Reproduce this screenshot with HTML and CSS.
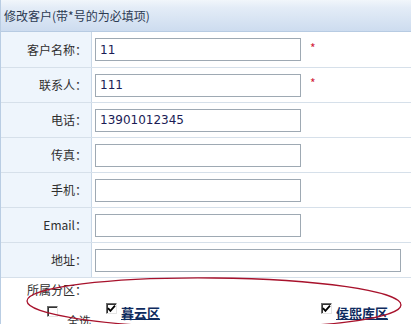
FILE: index.html
```html
<!DOCTYPE html>
<html lang="zh-CN">
<head>
    <meta charset="UTF-8">
    <title>修改客户</title>
    <link rel="stylesheet" href="styles.css">
</head>
<body>
    <div class="panel">
        <div class="panel-title">修改客户(带*号的为必填项)</div>

        <table class="form">
            <tr>
                <th>客户名称：</th>
                <td><input type="text" class="field" value="11"><span class="req">*</span></td>
            </tr>
            <tr>
                <th>联系人：</th>
                <td><input type="text" class="field" value="111"><span class="req">*</span></td>
            </tr>
            <tr>
                <th>电话：</th>
                <td><input type="text" class="field" value="13901012345"></td>
            </tr>
            <tr>
                <th>传真：</th>
                <td><input type="text" class="field"></td>
            </tr>
            <tr>
                <th>手机：</th>
                <td><input type="text" class="field"></td>
            </tr>
            <tr>
                <th>Email：</th>
                <td><input type="text" class="field"></td>
            </tr>
            <tr>
                <th>地址：</th>
                <td><input type="text" class="field wide"></td>
            </tr>
        </table>

        <div class="areas">
            <div class="areas-label">所属分区：</div>
            <div class="area-list">
                <label class="area-item all">
                    <span class="box"></span>
                    <span class="all-text">全选</span>
                </label>
                <label class="area-item">
                    <span class="box checked">
                        <svg width="9" height="9" viewBox="0 0 9 9"><path d="M1 4.2 L3.4 6.8 L8 1.6" fill="none" stroke="#000" stroke-width="1.8"/></svg>
                    </span>
                    <span class="area-name">暮云区</span>
                </label>
                <label class="area-item far">
                    <span class="box checked">
                        <svg width="9" height="9" viewBox="0 0 9 9"><path d="M1 4.2 L3.4 6.8 L8 1.6" fill="none" stroke="#000" stroke-width="1.8"/></svg>
                    </span>
                    <span class="area-name">侯熙库区</span>
                </label>
            </div>
        </div>

        <!-- hand drawn annotation over the area picker -->
        <svg class="mark" width="411" height="324" viewBox="0 0 411 324">
            <ellipse cx="214" cy="303" rx="187" ry="25" transform="rotate(0.6 214 303)" fill="none" stroke="#a8122c" stroke-width="1.3"/>
        </svg>
    </div>
</body>
</html>
```

FILE: styles.css
```css
body {
    margin: 0;
    font-family: "Noto Sans CJK SC", "DejaVu Sans", sans-serif;
    font-size: 12px;
    color: #333;
    background-color: #fff;
}
.panel {
    position: relative;
    width: 411px;
    height: 324px;
    overflow: hidden;
    border-left: 1px solid #b9cde3;
    box-sizing: border-box;
}
.panel-title {
    height: 31px;
    line-height: 31px;
    padding-left: 3px;
    color: #2c3a52;
    background: linear-gradient(to bottom, #f1f6fb 0%, #e3ecf7 25%, #cddcef 100%);
    border-bottom: 1px solid #b7cbe2;
}
.form {
    width: 100%;
    border-collapse: collapse;
}
.form tr {
    height: 35px;
}
.form th,
.form td {
    padding: 0;
    border-bottom: 1px solid #d6e0ea;
    vertical-align: middle;
}
.form th {
    width: 86px;
    padding-right: 4px;
    text-align: right;
    font-weight: normal;
    color: #2e2e2e;
    background-color: #eef5fc;
    border-right: 1px solid #c9d7e6;
}
.form td {
    padding-left: 3px;
}
.field {
    width: 206px;
    height: 23px;
    box-sizing: border-box;
    margin: 1px 0 0;
    padding: 0 4px;
    border: 1px solid #9ea9b3;
    font-family: "DejaVu Sans", sans-serif;
    font-size: 12px;
    color: #1b1c55;
    vertical-align: middle;
}
.field.wide {
    width: 306px;
}
.req {
    display: inline-block;
    margin-left: 9px;
    color: #d2233a;
    font-size: 12px;
    vertical-align: middle;
    position: relative;
    top: -2px;
}
.areas {
    padding-top: 3px;
}
.areas-label {
    width: 86px;
    text-align: right;
    line-height: 18px;
    color: #2e2e2e;
}
.area-list {
    display: flex;
    align-items: flex-start;
    padding-left: 46px;
    margin-top: 4px;
}
.area-item {
    display: flex;
    align-items: flex-start;
}
.area-item.all {
    margin-top: 3px;
    width: 59px;
}
.area-item.far {
    margin-left: 161px;
}
.box {
    display: flex;
    align-items: center;
    justify-content: center;
    flex-shrink: 0;
    width: 11px;
    height: 11px;
    box-sizing: border-box;
    background-color: #fff;
    border: 1px solid #e4e4e4;
    border-top-color: #6d6d6d;
    border-left-color: #6d6d6d;
    box-shadow: inset 1px 1px 0 #333;
}
.all-text {
    margin-left: 9px;
    margin-top: 7px;
    line-height: 16px;
    color: #333;
}
.area-name {
    margin-left: 4px;
    margin-top: 2px;
    line-height: 16px;
    font-size: 13px;
    font-weight: bold;
    color: #0e2b5e;
    text-decoration: underline;
}
.mark {
    position: absolute;
    left: -1px;
    top: 0;
    pointer-events: none;
}
```
